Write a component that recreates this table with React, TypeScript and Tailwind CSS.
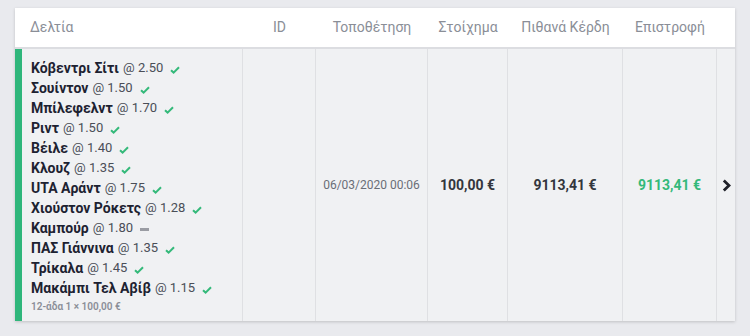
import React from "react";

const picks: { name: string; odd: string; status: "win" | "void" }[] = [
  { name: "Κόβεντρι Σίτι", odd: "2.50", status: "win" },
  { name: "Σουίντον", odd: "1.50", status: "win" },
  { name: "Μπίλεφελντ", odd: "1.70", status: "win" },
  { name: "Ριντ", odd: "1.50", status: "win" },
  { name: "Βέιλε", odd: "1.40", status: "win" },
  { name: "Κλουζ", odd: "1.35", status: "win" },
  { name: "UTA Αράντ", odd: "1.75", status: "win" },
  { name: "Χιούστον Ρόκετς", odd: "1.28", status: "win" },
  { name: "Καμπούρ", odd: "1.80", status: "void" },
  { name: "ΠΑΣ Γιάννινα", odd: "1.35", status: "win" },
  { name: "Τρίκαλα", odd: "1.45", status: "win" },
  { name: "Μακάμπι Τελ Αβίβ", odd: "1.15", status: "win" },
];

function Check() {
  return (
    <svg width="10" height="8" viewBox="0 0 10 8" className="ml-[7px] mt-[3px]">
      <path d="M1 4.2 L3.6 6.6 L9 1.2" fill="none" stroke="#34b97a" strokeWidth="2" />
    </svg>
  );
}

function Dash() {
  return <span className="ml-[7px] mt-[3px] inline-block h-[3px] w-[9px] bg-[#9a9ca3]" />;
}

export default function App() {
  return (
    <div className="min-h-[336px] w-[750px] bg-[#e9eaee] pt-[8px] pl-[15px]" style={{ fontFamily: "Roboto, 'Noto Sans', sans-serif" }}>
      <div className="w-[720px] shadow-[0_1px_3px_rgba(0,0,0,0.18)]">
        <div className="grid h-[41px] grid-cols-[228px_73px_112px_80px_115px_94px_18px] items-center border-b-[2px] border-[#dcdde1] bg-white text-[14px] text-[#8a8e97]">
          <div className="pl-[15px]">Δελτία</div>
          <div className="text-center">ID</div>
          <div className="text-center">Τοποθέτηση</div>
          <div className="text-center">Στοίχημα</div>
          <div className="text-center">Πιθανά Κέρδη</div>
          <div className="text-center">Επιστροφή</div>
          <div />
        </div>
        <div className="grid h-[272px] grid-cols-[228px_73px_112px_80px_115px_94px_18px] bg-[#f0f1f3]">
          <div className="flex border-r border-[#dfe0e3]">
            <div className="w-[7px] bg-[#2fb67b]" />
            <div className="pl-[9px] pt-[9px]">
              {picks.map((p) => (
                <div key={p.name} className="flex h-[20px] items-center whitespace-nowrap">
                  <span className="text-[14px] font-bold text-[#1d2231]">{p.name}</span>
                  <span className="ml-[4px] text-[13px] text-[#4a4e57]">@ {p.odd}</span>
                  {p.status === "win" ? <Check /> : <Dash />}
                </div>
              ))}
              <div className="mt-[1px] text-[10px] font-semibold text-[#8a8e97]">12-άδα 1 × 100,00 €</div>
            </div>
          </div>
          <div className="border-r border-[#dfe0e3]" />
          <div className="flex items-center justify-center border-r border-[#dfe0e3] text-[12px] text-[#6a6e77]">06/03/2020 00:06</div>
          <div className="flex items-center justify-center border-r border-[#dfe0e3] text-[14px] font-bold text-[#33363d]">100,00 €</div>
          <div className="flex items-center justify-center border-r border-[#dfe0e3] text-[14px] font-bold text-[#33363d]">9113,41 €</div>
          <div className="flex items-center justify-center border-r border-[#dfe0e3] text-[14px] font-bold text-[#34b97a]">9113,41 €</div>
          <div className="flex items-center justify-center">
            <svg width="9" height="13" viewBox="0 0 9 13">
              <path d="M1.8 1.5 L7 6.5 L1.8 11.5" fill="none" stroke="#1f2129" strokeWidth="2.8" />
            </svg>
          </div>
        </div>
      </div>
    </div>
  );
}
